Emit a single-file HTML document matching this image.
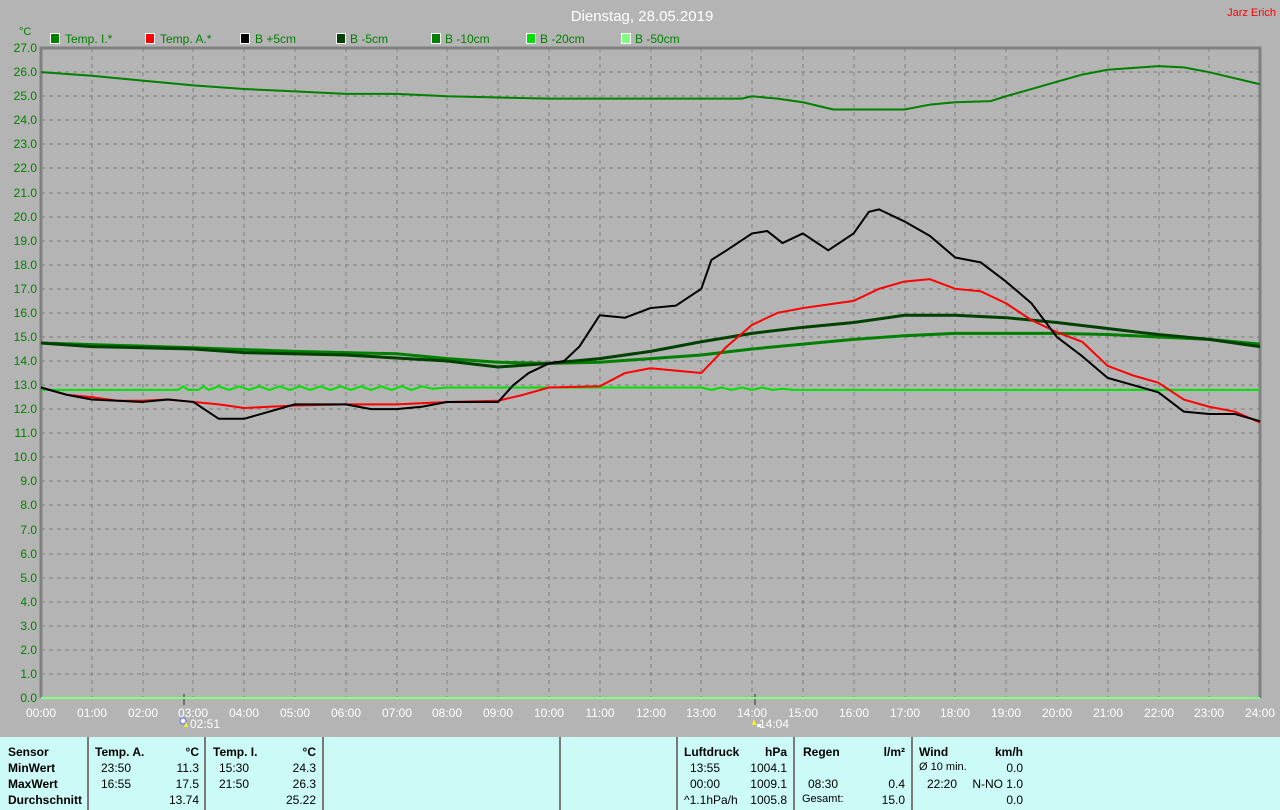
<!DOCTYPE html>
<html><head><meta charset="utf-8"><style>
body{margin:0;width:1280px;height:810px;background:#b4b4b4;overflow:hidden;font-family:"Liberation Sans",sans-serif;position:relative}
#tbl{position:absolute;left:0;top:737px;width:1280px;height:73px;background:#ccfaf6}
.v{position:absolute;top:0;width:2px;height:73px;background:#7a7a7a}
.c{position:absolute;font-size:12px;color:#000;white-space:nowrap}
.b{font-weight:bold}
</style></head><body>
<svg width="1280" height="737" style="position:absolute;left:0;top:0" font-family="Liberation Sans, sans-serif">
<text x="642" y="21" fill="#fff" font-size="15" text-anchor="middle">Dienstag, 28.05.2019</text>
<text x="1276" y="16" fill="#f00" font-size="11" text-anchor="end">Jarz Erich</text>
<text x="19" y="35" fill="#008000" font-size="11">°C</text>
<g font-size="12" fill="#008000">
<rect x="50.5" y="33.5" width="9" height="10" fill="#008000" stroke="#fff"/><text x="65" y="43">Temp. I.*</text>
<rect x="145.5" y="33.5" width="9" height="10" fill="#f00" stroke="#fff"/><text x="160" y="43">Temp. A.*</text>
<rect x="240.5" y="33.5" width="9" height="10" fill="#000" stroke="#fff"/><text x="255" y="43">B +5cm</text>
<rect x="336.5" y="33.5" width="9" height="10" fill="#004000" stroke="#fff"/><text x="350" y="43">B -5cm</text>
<rect x="431.5" y="33.5" width="9" height="10" fill="#008000" stroke="#fff"/><text x="445" y="43">B -10cm</text>
<rect x="526.5" y="33.5" width="9" height="10" fill="#00e000" stroke="#fff"/><text x="540" y="43">B -20cm</text>
<rect x="621.5" y="33.5" width="9" height="10" fill="#80ff80" stroke="#fff"/><text x="635" y="43">B -50cm</text>
</g>
<g stroke="#808080" stroke-dasharray="4,4" stroke-width="1">
<path d="M92,48V698M143,48V698M193,48V698M244,48V698M295,48V698M346,48V698M397,48V698M447,48V698M498,48V698M549,48V698M600,48V698M651,48V698M701,48V698M752,48V698M803,48V698M854,48V698M905,48V698M955,48V698M1006,48V698M1057,48V698M1108,48V698M1159,48V698M1209,48V698"/>
</g>
<g stroke="#808080" stroke-dasharray="4,4" stroke-width="1" transform="translate(0,698)">
<path d="M41,-24H1260M41,-48H1260M41,-72H1260M41,-96H1260M41,-120H1260M41,-144H1260M41,-169H1260M41,-193H1260M41,-217H1260M41,-241H1260M41,-265H1260M41,-289H1260M41,-313H1260M41,-337H1260M41,-361H1260M41,-385H1260M41,-409H1260M41,-433H1260M41,-457H1260M41,-481H1260M41,-505H1260M41,-530H1260M41,-554H1260M41,-578H1260M41,-602H1260M41,-626H1260"/>
</g>
<path d="M41,698V48H1260V698" fill="none" stroke="#808080" stroke-width="3"/>
<path d="M41,698H1260" stroke="#606060" stroke-width="1"/>
<path d="M184,694V705M755,694V705" stroke="#707070" stroke-width="2"/>
<g font-size="12" fill="#008000" text-anchor="end">
<text x="37" y="52">27.0</text><text x="37" y="76">26.0</text><text x="37" y="100">25.0</text><text x="37" y="124">24.0</text><text x="37" y="148">23.0</text><text x="37" y="172">22.0</text><text x="37" y="197">21.0</text><text x="37" y="221">20.0</text><text x="37" y="245">19.0</text><text x="37" y="269">18.0</text><text x="37" y="293">17.0</text><text x="37" y="317">16.0</text><text x="37" y="341">15.0</text><text x="37" y="365">14.0</text><text x="37" y="389">13.0</text><text x="37" y="413">12.0</text><text x="37" y="437">11.0</text><text x="37" y="461">10.0</text><text x="37" y="485">9.0</text><text x="37" y="509">8.0</text><text x="37" y="534">7.0</text><text x="37" y="558">6.0</text><text x="37" y="582">5.0</text><text x="37" y="606">4.0</text><text x="37" y="630">3.0</text><text x="37" y="654">2.0</text><text x="37" y="678">1.0</text><text x="37" y="702">0.0</text>
</g>
<g font-size="12" fill="#fff" text-anchor="middle">
<text x="41" y="717">00:00</text><text x="92" y="717">01:00</text><text x="143" y="717">02:00</text><text x="193" y="717">03:00</text><text x="244" y="717">04:00</text><text x="295" y="717">05:00</text><text x="346" y="717">06:00</text><text x="397" y="717">07:00</text><text x="447" y="717">08:00</text><text x="498" y="717">09:00</text><text x="549" y="717">10:00</text><text x="600" y="717">11:00</text><text x="651" y="717">12:00</text><text x="701" y="717">13:00</text><text x="752" y="717">14:00</text><text x="803" y="717">15:00</text><text x="854" y="717">16:00</text><text x="905" y="717">17:00</text><text x="955" y="717">18:00</text><text x="1006" y="717">19:00</text><text x="1057" y="717">20:00</text><text x="1108" y="717">21:00</text><text x="1159" y="717">22:00</text><text x="1209" y="717">23:00</text><text x="1260" y="717">24:00</text>
<text x="205" y="728">02:51</text><text x="774" y="728">14:04</text>
</g>
<circle cx="183" cy="721" r="3" fill="#fff" stroke="#6060ff" stroke-width="1"/><path d="M186,722l2,5h-4z" fill="#ff0"/>
<path d="M754,719l2,6h-4z" fill="#ff0"/><rect x="757" y="724" width="4" height="3" fill="#fff"/>
<g fill="none" stroke-linejoin="round" transform="translate(41,698) scale(50.79,-24.07)">
<polyline vector-effect="non-scaling-stroke" stroke="#80ff80" stroke-width="2" points="0,0 24,0"/>
<polyline vector-effect="non-scaling-stroke" stroke="#008000" stroke-width="2" points="0,26 1,25.85 2,25.65 3,25.45 4,25.3 5,25.2 6,25.1 7,25.1 8,25 9,24.95 10,24.9 11,24.9 12,24.9 13,24.9 13.8,24.9 14,25 14.5,24.9 15,24.75 15.6,24.45 16,24.45 17,24.45 17.5,24.65 18,24.75 18.7,24.8 19,25 19.5,25.3 20,25.6 20.5,25.9 21,26.1 22,26.25 22.5,26.2 23,26 24,25.5"/>
<polyline vector-effect="non-scaling-stroke" stroke="#008000" stroke-width="3" points="0,14.75 3,14.55 5,14.4 7,14.3 8,14.1 9,13.95 10,13.9 11,13.95 12,14.1 13,14.25 14,14.5 15,14.7 16,14.9 17,15.05 18,15.15 19,15.15 20,15.15 21,15.1 22,15 23,14.9 24,14.7"/>
<polyline vector-effect="non-scaling-stroke" stroke="#004000" stroke-width="3" points="0,14.75 1,14.6 3,14.5 4,14.35 6,14.25 8,14 9,13.75 10,13.9 11,14.1 12,14.4 13,14.8 14,15.15 15,15.4 16,15.6 17,15.9 18,15.9 19,15.8 20,15.6 21,15.35 22,15.1 23,14.9 24,14.6"/>
<polyline vector-effect="non-scaling-stroke" stroke="#00e000" stroke-width="2" points="0,12.8 2.7,12.8 2.8,12.95 2.9,12.8 3.1,12.8 3.2,12.95 3.3,12.8 3.5,12.95 3.7,12.8 3.9,12.95 4.1,12.8 4.3,12.95 4.5,12.8 4.7,12.95 4.9,12.8 5.1,12.95 5.3,12.8 5.5,12.95 5.7,12.8 5.9,12.95 6.1,12.8 6.3,12.95 6.5,12.8 6.7,12.95 6.9,12.8 7.1,12.95 7.3,12.8 7.5,12.95 7.7,12.85 8,12.9 10,12.9 13,12.9 13.2,12.8 13.4,12.9 13.6,12.8 13.8,12.9 14,12.8 14.2,12.9 14.4,12.8 14.6,12.85 14.8,12.8 24,12.8"/>
<polyline vector-effect="non-scaling-stroke" stroke="#f00" stroke-width="2" points="0,12.9 0.5,12.6 1,12.5 1.5,12.35 2,12.35 2.5,12.4 3,12.3 3.5,12.2 4,12.05 5,12.15 6,12.2 7,12.2 8,12.3 9,12.35 9.5,12.6 10,12.9 11,12.95 11.5,13.5 12,13.7 12.5,13.6 13,13.5 13.5,14.6 14,15.5 14.5,16 15,16.2 16,16.5 16.5,17 17,17.3 17.5,17.4 18,17 18.5,16.9 19,16.4 19.5,15.7 20,15.2 20.5,14.8 21,13.8 21.5,13.4 22,13.1 22.5,12.4 23,12.1 23.5,11.9 24,11.45"/>
<polyline vector-effect="non-scaling-stroke" stroke="#000" stroke-width="2" points="0,12.9 0.5,12.6 1,12.4 2,12.3 2.5,12.4 3,12.3 3.5,11.6 4,11.6 4.5,11.9 5,12.2 6,12.2 6.5,12 7,12 7.5,12.1 8,12.3 9,12.3 9.3,13 9.6,13.5 10,13.9 10.3,14 10.6,14.6 11,15.9 11.5,15.8 12,16.2 12.5,16.3 13,17 13.2,18.2 13.5,18.6 14,19.3 14.3,19.4 14.6,18.9 15,19.3 15.5,18.6 16,19.3 16.3,20.2 16.5,20.3 17,19.8 17.5,19.2 18,18.3 18.5,18.1 19,17.3 19.5,16.4 20,15 20.5,14.2 21,13.3 21.5,13 22,12.7 22.5,11.9 23,11.8 23.5,11.8 24,11.5"/>
</g>
</svg>
<div id="tbl">
<div class="v" style="left:87px"></div><div class="v" style="left:204px"></div><div class="v" style="left:322px"></div><div class="v" style="left:559px"></div><div class="v" style="left:676px"></div><div class="v" style="left:793px"></div><div class="v" style="left:911px"></div>
<div class="c b" style="left:8px;top:8px">Sensor</div><div class="c b" style="left:8px;top:24px">MinWert</div><div class="c b" style="left:8px;top:40px">MaxWert</div><div class="c b" style="left:8px;top:56px">Durchschnitt</div>
<div class="c b" style="left:95px;top:8px">Temp. A.</div><div class="c b" style="right:1081px;top:8px">°C</div>
<div class="c" style="left:101px;top:24px">23:50</div><div class="c" style="right:1081px;top:24px">11.3</div>
<div class="c" style="left:101px;top:40px">16:55</div><div class="c" style="right:1081px;top:40px">17.5</div>
<div class="c" style="right:1081px;top:56px">13.74</div>
<div class="c b" style="left:213px;top:8px">Temp. I.</div><div class="c b" style="right:964px;top:8px">°C</div>
<div class="c" style="left:219px;top:24px">15:30</div><div class="c" style="right:964px;top:24px">24.3</div>
<div class="c" style="left:219px;top:40px">21:50</div><div class="c" style="right:964px;top:40px">26.3</div>
<div class="c" style="right:964px;top:56px">25.22</div>
<div class="c b" style="left:684px;top:8px">Luftdruck</div><div class="c b" style="right:493px;top:8px">hPa</div>
<div class="c" style="left:690px;top:24px">13:55</div><div class="c" style="right:493px;top:24px">1004.1</div>
<div class="c" style="left:690px;top:40px">00:00</div><div class="c" style="right:493px;top:40px">1009.1</div>
<div class="c" style="left:684px;top:56px">^1.1hPa/h</div><div class="c" style="right:493px;top:56px">1005.8</div>
<div class="c b" style="left:803px;top:8px">Regen</div><div class="c b" style="right:375px;top:8px">l/m²</div>
<div class="c" style="left:808px;top:40px">08:30</div><div class="c" style="right:375px;top:40px">0.4</div>
<div class="c" style="left:802px;top:56px;font-size:11px">Gesamt:</div><div class="c" style="right:375px;top:56px">15.0</div>
<div class="c b" style="left:919px;top:8px">Wind</div><div class="c b" style="right:257px;top:8px">km/h</div>
<div class="c" style="left:919px;top:24px;font-size:11px">Ø 10 min.</div><div class="c" style="right:257px;top:24px">0.0</div>
<div class="c" style="left:927px;top:40px">22:20</div><div class="c" style="right:257px;top:40px">N-NO 1.0</div>
<div class="c" style="right:257px;top:56px">0.0</div>
</div>
</body></html>
